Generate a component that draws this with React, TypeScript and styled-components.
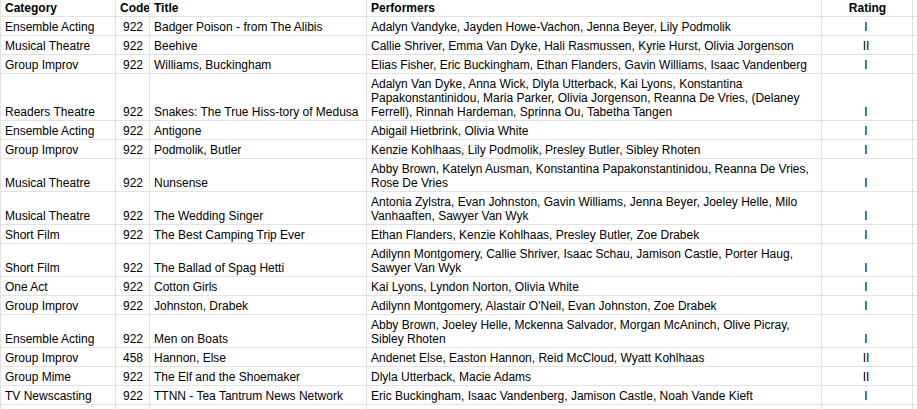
import React from 'react';
import styled, { createGlobalStyle } from 'styled-components';

type Entry = {
  category: string;
  code: number;
  title: string;
  performers: string[];
  rating: string;
  extra?: string;
};

const entries: Entry[] = [
  {
    category: 'Ensemble Acting',
    code: 922,
    title: 'Badger Poison - from The Alibis',
    performers: ['Adalyn Vandyke, Jayden Howe-Vachon, Jenna Beyer, Lily Podmolik'],
    rating: 'I',
  },
  {
    category: 'Musical Theatre',
    code: 922,
    title: 'Beehive',
    performers: ['Callie Shriver, Emma Van Dyke, Hali Rasmussen, Kyrie Hurst, Olivia Jorgenson'],
    rating: 'II',
  },
  {
    category: 'Group Improv',
    code: 922,
    title: 'Williams, Buckingham',
    performers: ['Elias Fisher, Eric Buckingham, Ethan Flanders, Gavin Williams, Isaac Vandenberg'],
    rating: 'I',
  },
  {
    category: 'Readers Theatre',
    code: 922,
    title: 'Snakes: The True Hiss-tory of Medusa',
    performers: [
      'Adalyn Van Dyke, Anna Wick, Dlyla Utterback, Kai Lyons, Konstantina',
      'Papakonstantinidou, Maria Parker, Olivia Jorgenson, Reanna De Vries, (Delaney',
      'Ferrell), Rinnah Hardeman, Sprinna Ou, Tabetha Tangen',
    ],
    rating: 'I',
  },
  {
    category: 'Ensemble Acting',
    code: 922,
    title: 'Antigone',
    performers: ['Abigail Hietbrink, Olivia White'],
    rating: 'I',
  },
  {
    category: 'Group Improv',
    code: 922,
    title: 'Podmolik, Butler',
    performers: ['Kenzie Kohlhaas, Lily Podmolik, Presley Butler, Sibley Rhoten'],
    rating: 'I',
  },
  {
    category: 'Musical Theatre',
    code: 922,
    title: 'Nunsense',
    performers: [
      'Abby Brown, Katelyn Ausman, Konstantina Papakonstantinidou, Reanna De Vries,',
      'Rose De Vries',
    ],
    rating: 'I',
  },
  {
    category: 'Musical Theatre',
    code: 922,
    title: 'The Wedding Singer',
    performers: [
      'Antonia Zylstra, Evan Johnston, Gavin Williams, Jenna Beyer, Joeley Helle, Milo',
      'Vanhaaften, Sawyer Van Wyk',
    ],
    rating: 'I',
  },
  {
    category: 'Short Film',
    code: 922,
    title: 'The Best Camping Trip Ever',
    performers: ['Ethan Flanders, Kenzie Kohlhaas, Presley Butler, Zoe Drabek'],
    rating: 'I',
  },
  {
    category: 'Short Film',
    code: 922,
    title: 'The Ballad of Spag Hetti',
    performers: [
      'Adilynn Montgomery, Callie Shriver, Isaac Schau, Jamison Castle, Porter Haug,',
      'Sawyer Van Wyk',
    ],
    rating: 'I',
  },
  {
    category: 'One Act',
    code: 922,
    title: 'Cotton Girls',
    performers: ['Kai Lyons, Lyndon Norton, Olivia White'],
    rating: 'I',
    extra: 'I',
  },
  {
    category: 'Group Improv',
    code: 922,
    title: 'Johnston, Drabek',
    performers: ["Adilynn Montgomery, Alastair O'Neil, Evan Johnston, Zoe Drabek"],
    rating: 'I',
  },
  {
    category: 'Ensemble Acting',
    code: 922,
    title: 'Men on Boats',
    performers: [
      'Abby Brown, Joeley Helle, Mckenna Salvador, Morgan McAninch, Olive Picray,',
      'Sibley Rhoten',
    ],
    rating: 'I',
  },
  {
    category: 'Group Improv',
    code: 458,
    title: 'Hannon, Else',
    performers: ['Andenet Else, Easton Hannon, Reid McCloud, Wyatt Kohlhaas'],
    rating: 'II',
  },
  {
    category: 'Group Mime',
    code: 922,
    title: 'The Elf and the Shoemaker',
    performers: ['Dlyla Utterback, Macie Adams'],
    rating: 'II',
  },
  {
    category: 'TV Newscasting',
    code: 922,
    title: 'TTNN - Tea Tantrum News Network',
    performers: ['Eric Buckingham, Isaac Vandenberg, Jamison Castle, Noah Vande Kieft'],
    rating: 'I',
  },
];

export default function App() {
  return (
    <>
      <GlobalStyle />
      <Sheet>
        <Row header>
          <Cell header>Category</Cell>
          <Cell header>Code</Cell>
          <Cell header>Title</Cell>
          <Cell header>Performers</Cell>
          <Cell header align="center">
            Rating
          </Cell>
          <Cell header />
        </Row>
        {entries.map((e, i) => (
          <Row key={i}>
            <Cell>{e.category}</Cell>
            <Cell align="right">{e.code}</Cell>
            <Cell>{e.title}</Cell>
            <Cell>
              {e.performers.map((line, j) => (
                <Line key={j}>{line}</Line>
              ))}
            </Cell>
            <Cell align="center">{e.rating}</Cell>
            <Cell>{e.extra}</Cell>
          </Row>
        ))}
        <Row>
          <Cell />
          <Cell />
          <Cell />
          <Cell />
          <Cell />
          <Cell />
        </Row>
      </Sheet>
    </>
  );
}

const GlobalStyle = createGlobalStyle`
  html, body {
    margin: 0;
    padding: 0;
    background: #fff;
    overflow: hidden;
  }
  body {
    font-family: "Liberation Sans", Arial, sans-serif;
    font-size: 12px;
    color: #000;
  }
`;

const Sheet = styled.div`
  width: 917px;
  height: 409px;
  overflow: hidden;
`;

const Row = styled.div<{ header?: boolean }>`
  display: grid;
  grid-template-columns: 116px 34px 217px 455px 91px 40px;
  font-weight: ${({ header }) => (header ? 700 : 400)};
`;

const Cell = styled.div<{ header?: boolean; align?: 'left' | 'right' | 'center' }>`
  display: flex;
  flex-direction: column;
  justify-content: flex-end;
  align-items: ${({ align }) =>
    align === 'right' ? 'flex-end' : align === 'center' ? 'center' : 'flex-start'};
  padding: ${({ header }) => (header ? '1px 3px 1px 4px' : '3px 6px 1px 4px')};
  min-height: 14px;
  line-height: 14px;
  white-space: nowrap;
  overflow: hidden;
  border-right: 1px solid #e2e2e2;
  border-bottom: 1px solid #e2e2e2;

  &:first-child {
    border-left: 1px solid #e2e2e2;
  }
`;

const Line = styled.span`
  display: block;
`;
